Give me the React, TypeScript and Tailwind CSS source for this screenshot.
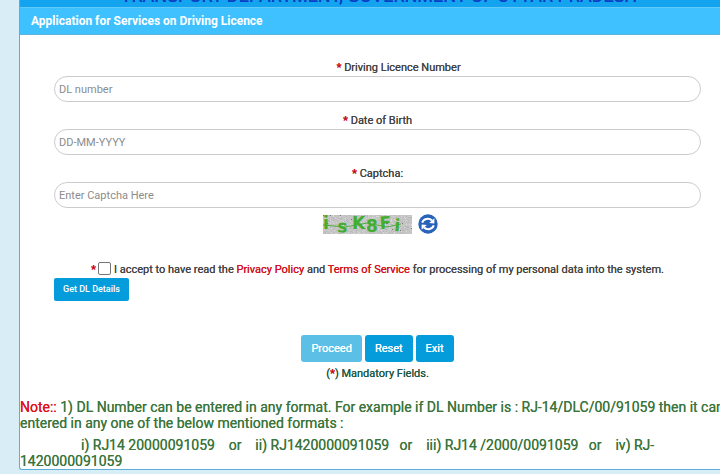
import type { FC, ReactNode } from 'react'
import { useState } from 'react'

const Star: FC = () => <span className="font-bold text-[#c8101c]">*</span>

interface FieldProps {
  id: string
  label: string
  placeholder: string
  labelClass?: string
}

const Field: FC<FieldProps> = ({ id, label, placeholder, labelClass = '' }) => (
  <div className="flex flex-col">
    <label
      htmlFor={id}
      className={`h-[17px] text-center text-[11px] leading-[18px] text-[#444444] text-shadow-[0_0_0_currentColor] ${labelClass}`}
    >
      <Star /> {label}
    </label>
    <input
      id={id}
      type="text"
      placeholder={placeholder}
      className="h-[26px] w-full rounded-full border border-[#cccccc] bg-white px-1 text-[11px] text-gray-700 placeholder:text-[#8c8c8c] focus:outline-none"
    />
  </div>
)

const ActionButton: FC<{ children: ReactNode; disabled?: boolean }> = ({ children, disabled }) => (
  <button
    type="button"
    disabled={disabled}
    className="h-[27px] rounded-[3px] bg-[#049cdb] px-[10px] pt-px text-[11px] text-white text-shadow-[0_0_0_currentColor] disabled:bg-[#5bbfe6]"
  >
    {children}
  </button>
)

// Speckles of the captcha background
const specks = Array.from({ length: 520 }, (_, i) => ({
  x: (i * 37 + ((i * i) % 23)) % 89,
  y: (i * 11 + ((i * i * 3) % 17)) % 19,
  fill: i % 29 === 0 ? '#777777' : i % 3 === 0 ? '#dadada' : '#b8b8b8',
}))

const letters = [
  { char: 'i', x: 0, y: 14, turn: 0 },
  { char: 's', x: 14, y: 17, turn: 4 },
  { char: 'K', x: 29, y: 14, turn: 0 },
  { char: '8', x: 43, y: 17, turn: 0 },
  { char: 'F', x: 57, y: 14, turn: -4 },
  { char: 'i', x: 71, y: 16, turn: 4 },
]

const Captcha: FC = () => (
  <svg width="89" height="19" viewBox="0 0 89 19" role="img" aria-label="Captcha">
    <rect width="89" height="19" fill="#c6c6c6" />
    {specks.map((s, i) => (
      <rect key={i} x={s.x} y={s.y} width="1" height="1" fill={s.fill} />
    ))}
    <path d="M0 10 L22 12 L44 8 L64 12 L78 9" fill="none" stroke="#4fae3c" strokeWidth="1" />
    {letters.map((l, i) => (
      <text
        key={i}
        x={l.x}
        y={l.y}
        fontSize="17"
        fontWeight="700"
        fontFamily="'DejaVu Sans', sans-serif"
        fill="#43ad2f"
        transform={`rotate(${l.turn} ${l.x} ${l.y})`}
      >
        {l.char}
      </text>
    ))}
  </svg>
)

const RefreshIcon: FC = () => (
  <svg width="20" height="20" viewBox="0 0 20 20" aria-hidden="true">
    <circle cx="10" cy="10" r="9.7" fill="#2763b8" />
    <g fill="none" stroke="#ffffff" strokeWidth="2">
      <path d="M4.2 8.6 C5.4 5 10.6 3.4 14 6.6" />
      <path d="M15.8 11.4 C14.6 15 9.4 16.6 6 13.4" />
    </g>
    <path d="M16.4 4.2 L16.4 9.4 L11.2 9 Z" fill="#ffffff" />
    <path d="M3.6 15.8 L3.6 10.6 L8.8 11 Z" fill="#ffffff" />
  </svg>
)

export default function App() {
  const [accepted, setAccepted] = useState(false)

  return (
    <div className="overflow-hidden bg-[#d9edf7] pb-1 pl-[19px] font-[Roboto,sans-serif]">
      <div className="rounded-bl-[3px] border-b border-l border-[#5aaed8] bg-white">
        {/* Department banner, scrolled almost out of view */}
        <div className="flex h-[7px] items-end justify-center overflow-hidden bg-[#14a3ee] pb-px pl-[18px]">
          <h1 className="text-[18px] leading-5 whitespace-nowrap text-[#0c3fc4] text-shadow-[0_0_0_currentColor]">
            TRANSPORT DEPARTMENT, GOVERNMENT OF UTTAR PRADESH
          </h1>
        </div>
        <h2 className="h-7 border-t border-b border-t-[#5fcaf8] border-b-[#5ab4e0] bg-[#40c1ff] pl-[11px] text-[12px] leading-[26px] font-bold text-white">
          Application for Services on Driving Licence
        </h2>

        <form className="flex flex-col pt-6 pr-[19px] pl-[34px]">
          <div className="flex flex-col gap-[10px]">
            <Field id="dl" label="Driving Licence Number" placeholder="DL number" labelClass="pl-[42px]" />
            <Field id="dob" label="Date of Birth" placeholder="DD-MM-YYYY" />
            <Field id="captcha" label="Captcha:" placeholder="Enter Captcha Here" />
          </div>

          <div className="mt-[6px] flex items-center justify-center gap-[6px] pl-[6px]">
            <Captcha />
            <button type="button" aria-label="Refresh captcha">
              <RefreshIcon />
            </button>
          </div>

          <div className="mt-[28px] flex h-4 items-center justify-center text-[11px] leading-4 whitespace-nowrap text-[#444444] text-shadow-[0_0_0_currentColor]">
            <Star />
            <input
              id="accept"
              type="checkbox"
              checked={accepted}
              onChange={(e) => setAccepted(e.target.checked)}
              className="mr-[3px] mb-1 ml-[2px] size-[13px] appearance-none rounded-[2px] border border-[#767676] bg-white checked:bg-[#049cdb]"
            />
            <label htmlFor="accept">
              I accept to have read the{' '}
              <a href="#privacy" className="text-[#d4101c]">Privacy Policy</a> and{' '}
              <a href="#terms" className="text-[#d4101c]">Terms of Service</a> for processing of my
              personal data into the system.
            </label>
          </div>
          <button
            type="button"
            className="h-[23px] self-start rounded-[2px] bg-[#049cdb] px-[9px] text-[9px] font-medium text-white"
          >
            Get DL Details
          </button>

          <div className="mt-[34px] flex justify-center gap-[3px]">
            <ActionButton disabled>Proceed</ActionButton>
            <ActionButton>Reset</ActionButton>
            <ActionButton>Exit</ActionButton>
          </div>
          <p className="mt-1 text-center text-[11px] leading-4 text-[#1c5a44] text-shadow-[0_0_0_currentColor]">
            (<Star />) Mandatory Fields.
          </p>
        </form>

        {/* Accepted number formats */}
        <div className="-mr-3 mt-[17px] text-[14px] leading-4 text-[#3c763d] text-shadow-[0_0_0_currentColor]">
          <p>
            <span className="text-[#e0101c]">Note::</span> 1) DL Number can be entered in any format.
            For example if DL Number is : RJ-14/DLC/00/91059 then it can entered in any one of the
            below mentioned formats :
          </p>
          <p className="mt-[6px] indent-[61px]">
            i) RJ14 20000091059 &nbsp;&nbsp; or &nbsp;&nbsp; ii) RJ1420000091059 &nbsp; or &nbsp;&nbsp;
            iii) RJ14 /2000/0091059 &nbsp; or &nbsp;&nbsp; iv) RJ-1420000091059
          </p>
        </div>
      </div>
    </div>
  )
}
